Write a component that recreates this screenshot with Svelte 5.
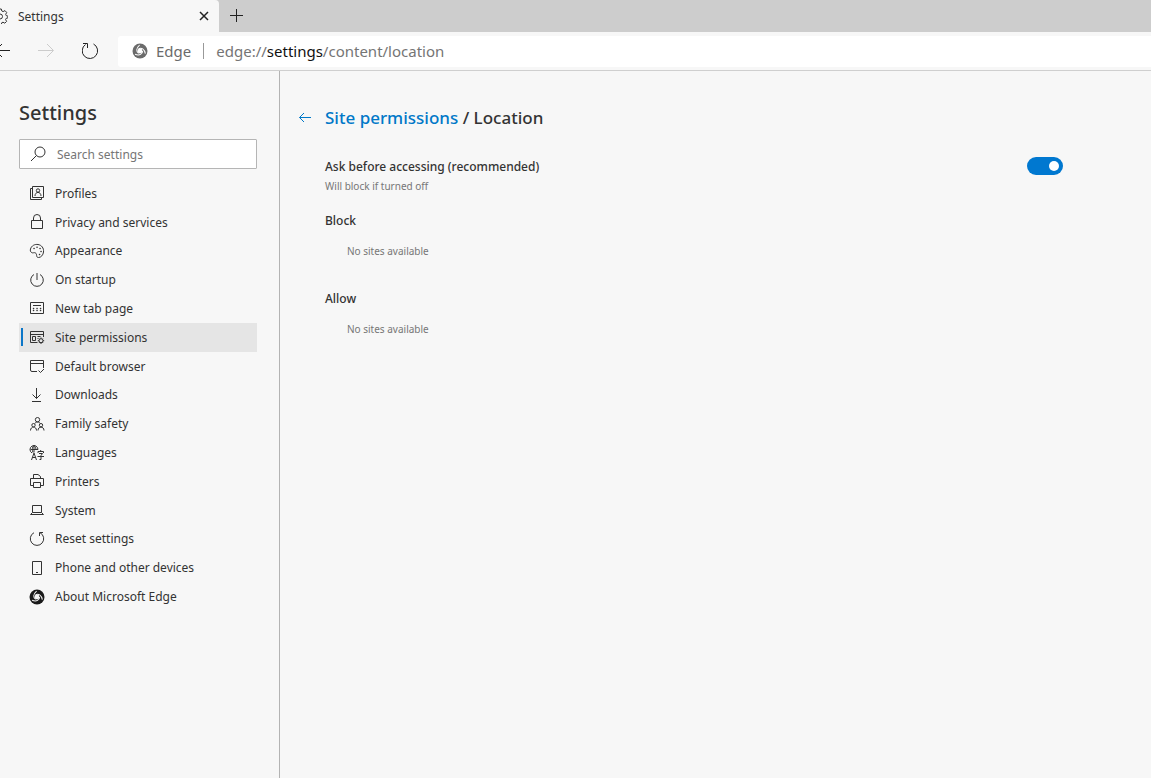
<script lang="ts">
	const items = [
		{ label: 'Profiles', icon: 'profiles' },
		{ label: 'Privacy and services', icon: 'lock' },
		{ label: 'Appearance', icon: 'palette' },
		{ label: 'On startup', icon: 'power' },
		{ label: 'New tab page', icon: 'newtab' },
		{ label: 'Site permissions', icon: 'permissions' },
		{ label: 'Default browser', icon: 'browser' },
		{ label: 'Downloads', icon: 'download' },
		{ label: 'Family safety', icon: 'family' },
		{ label: 'Languages', icon: 'languages' },
		{ label: 'Printers', icon: 'printer' },
		{ label: 'System', icon: 'laptop' },
		{ label: 'Reset settings', icon: 'reset' },
		{ label: 'Phone and other devices', icon: 'phone' },
		{ label: 'About Microsoft Edge', icon: 'edge' }
	]

	const paths: Record<string, string> = {
		profiles: 'M3.5 1.5h11v11h-11zM3.5 3.5h-2v11h11v-2M9 3.8a1.7 1.7 0 1 1 0 3.4A1.7 1.7 0 0 1 9 3.8M6 11c0-4.8 6-4.8 6 0',
		lock: 'M2.5 6.5h11v8h-11zM4.5 6.5V4a3.5 3.5 0 0 1 7 0v2.5',
		palette: 'M1.5 6C2.5 2.5 6 1 9 1.5c3.5.5 6 3.5 5.5 7.5-.3 3-2.5 5.5-5 5.5-3 0-1-3.5-3-4.5C5 9 4 10.5 2.5 9.5 1.5 8.8 1 7.5 1.5 6z',
		power: 'M8 1v7M5 2.5a6.3 6.3 0 1 0 6 0',
		newtab: 'M1.5 1.5h13v11h-13zM4 4.5h8',
		permissions: 'M8.5 13.5h-7v-11h13V8M1.5 5.5h13M3.5 7.5h3v4h-3zM8.5 7.5h3M8.5 9.5h1M12 9.7a2 2 0 1 1 0 4 2 2 0 0 1 0-4M12 8.5v1.2M12 13.7V15M8.8 11.7H10M14 11.7h1.2M9.9 9.6l.8.7M13.3 13.1l.9.9M14.2 9.6l-.9.7M10.7 13.1l-.8.9',
		browser: 'M8 13.5H3A1.5 1.5 0 0 1 1.5 12V2.5h13V10M1.5 5.5h13M9.5 12.5l2 2L15 11',
		download: 'M7.5 1v10.5M3.5 7.5l4 4 4-4M3 14.5h9',
		family: 'M8.5 1.5a2.2 2.2 0 1 1 0 4.4 2.2 2.2 0 0 1 0-4.4M5.8 7.5c1-2 4.4-2 5.4 0M4.5 7.5a1.7 1.7 0 1 1 0 3.4 1.7 1.7 0 0 1 0-3.4M12 7.5a1.7 1.7 0 1 1 0 3.4 1.7 1.7 0 0 1 0-3.4M1.5 14.5c0-4.5 6-4.5 6 0M9 14.5c0-4.5 6-4.5 6 0',
		languages: 'M9 4.5A4 4 0 1 0 3 8M1.5 4.5H9M5 .5v7M5 .5c-2 1.5-2 4.5-1 7M5 .5c2 1.5 2 3 1.7 4.5M2.5 15L5 8l2.5 7M3.5 12.5h3M9 8V6.5h5.5V8M11.7 5v1.5M10 8.5h3.5l-1.5 2v4h-1.5M8.5 11.5H15',
		printer: 'M4.5 5.5v-4H9l2.5 2v2M4.5 12.5h-3v-7h13v7h-3M4.5 9.5h7v5h-7z',
		laptop: 'M3.5 3.5h9v7h-9zM3.5 10.5l-2 2h13l-2-2',
		reset: 'M5 1.7a6.7 6.7 0 1 0 6 0M14 1.5h-3.5V5',
		phone: 'M3.5 1.5h9v13h-9zM7 12.5h2'
	}

	const dots: Record<string, string> = {
		palette: 'M5 5.5h.1M8 4.2h.1M11 5.5h.1M12 8.5h.1M10.5 11.5h.1',
		newtab: 'M4.5 7.5h.1M8 7.5h.1M11.5 7.5h.1M4.5 9.5h.1M8 9.5h.1M11.5 9.5h.1'
	}

	let query = $state('')
	let ask = $state(true)
</script>

{#snippet swirl()}
	<svg class="swirl" viewBox="0 0 16 16" aria-hidden="true">
		<circle cx="8" cy="8" r="7.5" fill="currentColor" />
		{#each [-10, 110, 230] as turn}
			<path transform={`rotate(${turn} 8 8)`} d="M7 5.5c3-1 5.8 1.2 5.8 6" />
		{/each}
		<circle class="hole" cx="8" cy="8" r="2.4" />
	</svg>
{/snippet}

<div class="window">
	<header>
		<div class="tabs">
			<div class="tab">
				<svg viewBox="0 0 16 16" aria-hidden="true">
					<path d="M6.7 1h2.6l.5 2 1.3.6 1.9-1 1.7 1.9-1 1.8.5 1.3 1.8.6v1.6l-1.9.6-.5 1.2 1 1.8-1.8 1.8-1.8-1-1.2.5-.5 1.8H6.7l-.5-1.8-1.2-.5-1.8 1-1.8-1.8 1-1.8L2 10.4.1 9.8V7.7L2 7.2l.5-1.2-1-1.9L3.3 2.5l1.8 1 1.2-.5z" />
					<circle cx="8" cy="8.5" r="2.5" />
				</svg>
				<span>Settings</span>
				<button aria-label="Close tab">
					<svg class="close" viewBox="0 0 10 10"><path d="M1 1l8 8M9 1l-8 8" /></svg>
				</button>
			</div>
			<button class="new" aria-label="New tab">
				<svg viewBox="0 0 16 16"><path d="M7.5 1v13M1 7.5h13" /></svg>
			</button>
		</div>
		<div class="toolbar">
			<button aria-label="Back">
				<svg viewBox="0 0 18 18"><path d="M18 8.5H3M10 2L3.5 8.5 10 15" /></svg>
			</button>
			<button aria-label="Forward" disabled>
				<svg viewBox="0 0 18 18"><path d="M1 8.5h15M10 2l6.5 6.5L10 15" /></svg>
			</button>
			<button aria-label="Refresh">
				<svg viewBox="0 0 18 18"><path d="M11.5 2a7.7 7.7 0 1 1-8 .5M1 1.500h4.500V6" /></svg>
			</button>
			<div class="address">
				{@render swirl()}
				<span class="brand">Edge</span>
				<div class="url" contenteditable="true" role="textbox" tabindex="0" aria-label="Address">edge://<b>settings</b>/content/location</div>
			</div>
		</div>
	</header>

	<div class="body">
		<aside>
			<h1>Settings</h1>
			<label class="search">
				<svg viewBox="0 0 16 16" aria-hidden="true">
					<circle cx="10" cy="6" r="5" />
					<path d="M6.5 9.5L1 15" />
				</svg>
				<input type="text" placeholder="Search settings" aria-label="Search settings" bind:value={query} />
			</label>
			<nav>
				{#each items as item}
					<a href="#{item.icon}" class:active={item.icon === 'permissions'}>
						{#if item.icon === 'edge'}
							{@render swirl()}
						{:else}
							<svg viewBox="0 0 16 16" aria-hidden="true">
								<path d={paths[item.icon]} />
								{#if dots[item.icon]}
									<path class="dots" d={dots[item.icon]} />
								{/if}
							</svg>
						{/if}
						{item.label}
					</a>
				{/each}
			</nav>
		</aside>

		<main>
			<div class="crumbs">
				<button aria-label="Back to site permissions">
					<svg viewBox="0 0 14 14"><path d="M13 6.5H1.5M6 2L1.5 6.5 6 11" /></svg>
				</button>
				<h2><a href="#permissions">Site permissions</a> / Location</h2>
			</div>
			<div class="setting">
				<label for="ask">Ask before accessing (recommended)</label>
				<input id="ask" type="checkbox" role="switch" bind:checked={ask} />
			</div>
			<p class="hint">Will block if turned off</p>
			<section>
				<h3>Block</h3>
				<p>No sites available</p>
			</section>
			<section>
				<h3>Allow</h3>
				<p>No sites available</p>
			</section>
		</main>
	</div>
</div>

<style>
	:global(body) {
		margin: 0;
		background: #f7f7f7;
	}

	.window {
		display: flex;
		flex-direction: column;
		min-height: 100vh;
		overflow: hidden;
		font-family: 'Segoe UI', 'Noto Sans', sans-serif;
		font-size: 12px;
		color: #333;
	}

	svg {
		display: block;
		flex: none;
		width: 16px;
		height: 16px;
		fill: none;
		stroke: currentColor;
	}

	button {
		display: flex;
		padding: 0;
		border: 0;
		background: none;
		color: #222;
	}

	a {
		color: inherit;
		text-decoration: none;
	}

	h1,
	h2,
	h3,
	p {
		margin: 0;
		font-weight: 500;
	}

	header {
		border-bottom: 1px solid #cfcfcf;
	}

	.tabs {
		display: flex;
		align-items: center;
		height: 32px;
		background: #cdcdcd;
	}

	/* tab and toolbar start a little past the window's left edge */
	.tab {
		display: flex;
		align-items: center;
		gap: 10px;
		box-sizing: border-box;
		width: 227px;
		height: 32px;
		margin-left: -8px;
		padding-right: 2px;
		border-radius: 0 4px 0 0;
		background: #f7f7f7;
	}

	.tab span {
		flex: 1;
	}

	.tab button {
		padding: 8px;
	}

	.close {
		width: 10px;
		height: 10px;
		stroke-width: 1.5;
	}

	.new {
		padding: 0 10px;
	}

	.toolbar {
		display: flex;
		align-items: center;
		gap: 27px;
		height: 38px;
		margin-left: -8px;
	}

	.toolbar button svg {
		width: 18px;
		height: 18px;
	}

	.toolbar button:disabled {
		color: #ccc;
	}

	.address {
		--page: #fff;
		display: flex;
		flex: 1;
		align-items: center;
		height: 31px;
		margin-left: -9px;
		padding-left: 14px;
		border-radius: 3px 0 0 3px;
		background: #fff;
		color: #6b6b6b;
		font-size: 15px;
	}

	.brand {
		margin-left: 8px;
		padding-right: 12px;
		border-right: 1px solid #999;
		line-height: 16px;
	}

	.url {
		margin-left: 12px;
		color: #757575;
	}

	.url b {
		color: #111;
		font-weight: 400;
	}

	.swirl path {
		stroke: var(--page, #f7f7f7);
	}

	.swirl circle {
		stroke: none;
	}

	.swirl .hole {
		fill: var(--page, #f7f7f7);
	}

	.body {
		display: flex;
		flex: 1;
	}

	aside {
		box-sizing: border-box;
		flex: none;
		width: 280px;
		padding: 28px 22px 28px 19px;
		border-right: 1px solid #b3b3b3;
	}

	h1 {
		font-size: 20px;
		line-height: 28px;
	}

	.search {
		display: flex;
		align-items: center;
		gap: 11px;
		height: 28px;
		margin-top: 12px;
		padding-left: 10px;
		border: 1px solid #b5b5b5;
		border-radius: 1px;
		background: #fff;
	}

	.search input {
		flex: 1;
		min-width: 0;
		padding: 0;
		border: 0;
		outline: 0;
		background: none;
		font: inherit;
	}

	.search input::placeholder {
		color: #767676;
	}

	nav {
		display: grid;
		grid-auto-rows: 1fr;
		min-height: 432px;
		margin-top: 10px;
	}

	nav a {
		display: flex;
		align-items: center;
		gap: 10px;
		padding-left: 10px;
	}

	nav a.active {
		background: linear-gradient(#0b76c8, #0b76c8) 2px center / 2px 18px no-repeat #e5e5e5;
	}

	nav .swirl {
		color: #1b1b1b;
	}

	.dots {
		stroke-width: 1.5;
		stroke-linecap: round;
	}

	main {
		flex: 1;
		max-width: 738px;
		padding: 34px 45px;
	}

	.crumbs {
		display: flex;
		align-items: center;
		gap: 13px;
		margin-left: -27px;
	}

	.crumbs button,
	.crumbs a {
		color: #0078c8;
	}

	.crumbs svg {
		width: 14px;
		height: 14px;
	}

	h2 {
		font-size: 17px;
		line-height: 26px;
	}

	.setting {
		display: flex;
		align-items: center;
		justify-content: space-between;
		margin-top: 26px;
		font-weight: 500;
	}

	.setting input {
		display: flex;
		align-items: center;
		box-sizing: border-box;
		width: 36px;
		height: 18px;
		margin: 0;
		padding: 0 4px;
		border-radius: 9px;
		background: #888;
		appearance: none;
	}

	.setting input::before {
		width: 10px;
		height: 10px;
		border-radius: 50%;
		background: #fff;
		content: '';
	}

	.setting input:checked {
		justify-content: flex-end;
		background: #0078d0;
	}

	p {
		color: #767676;
		font-size: 10px;
		font-weight: 400;
		line-height: 16px;
	}

	.hint {
		margin-top: 3px;
	}

	section {
		padding-top: 18px;
	}

	section + section {
		padding-top: 31px;
	}

	h3 {
		font-size: 12px;
		line-height: 18px;
	}

	section p {
		margin: 13px 0 0 22px;
	}
</style>
